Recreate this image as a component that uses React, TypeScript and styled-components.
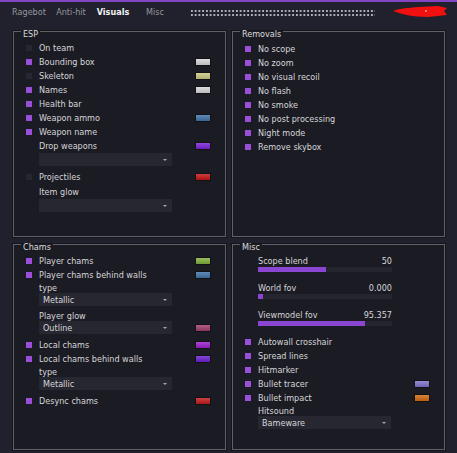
import React from 'react';
import styled, { createGlobalStyle } from 'styled-components';

const BG = '#20212c';
const BOX = '#1b1b23';
const PURPLE = '#9a4fdb';

const GlobalStyle = createGlobalStyle`
  html, body {
    margin: 0;
    padding: 0;
    background: ${BG};
  }
  body {
    font-family: "DejaVu Sans Condensed", "DejaVu Sans", sans-serif;
    font-stretch: condensed;
    font-size: 9px;
    color: #d6d6d9;
  }
`;

const Page = styled.div`
  width: 457px;
  height: 453px;
  background: ${BG};
  overflow: hidden;
`;

const TopLine = styled.div`
  height: 2px;
  background: #8344c4;
`;

const TabBar = styled.div`
  height: 20px;
  display: flex;
  align-items: center;
  padding-left: 8px;
`;

const Tab = styled.div<{ $active?: boolean }>`
  width: 42px;
  text-align: center;
  color: ${(p) => (p.$active ? '#f2f2f4' : '#95969e')};
  font-weight: ${(p) => (p.$active ? 700 : 400)};
`;

// censored user name dots
const Dots = styled.div`
  margin-left: 14px;
  margin-top: 2px;
  width: 185px;
  height: 8px;
  background-image: radial-gradient(circle, #b0b0b8 0.8px, transparent 1.1px);
  background-size: 3.75px 4px;
`;

const Scribble = styled.svg`
  margin-left: auto;
  margin-right: 9px;
  margin-top: -2px;
`;

const Grid = styled.div`
  display: grid;
  grid-template-columns: 213px 213px;
  grid-template-rows: 206px 206px;
  column-gap: 6px;
  row-gap: 7px;
  padding: 9px 0 0 13px;
`;

const Group = styled.div`
  position: relative;
  box-sizing: border-box;
  border: 1px solid #5f6068;
  box-shadow: 0 0 0 1px #15151b;
  background: ${BOX};
  padding: 9px 15px 0 12px;
`;

const GroupTitle = styled.span`
  position: absolute;
  top: -3px;
  left: 7px;
  padding: 0 2px;
  line-height: 11px;
  color: #dcdcde;
  background: linear-gradient(to bottom, transparent 2px, ${BOX} 2px);
`;

const Row = styled.div<{ $h?: number; $mt?: number }>`
  display: flex;
  align-items: center;
  height: ${(p) => p.$h ?? 14}px;
  margin-top: ${(p) => p.$mt ?? 0}px;
  white-space: nowrap;
`;

const Check = styled.span<{ $on?: boolean }>`
  width: 6px;
  height: 6px;
  margin-right: 7px;
  flex: none;
  background: ${(p) => (p.$on ? PURPLE : '#262733')};
`;

const Indent = styled.span`
  padding-left: 13px;
`;

const Swatch = styled.span<{ $c: string }>`
  margin-left: auto;
  width: 14px;
  height: 6px;
  flex: none;
  box-shadow: 0 0 0 1px rgba(0, 0, 0, 0.35);
  background: linear-gradient(to bottom, rgba(255, 255, 255, 0.18), rgba(0, 0, 0, 0.12)), ${(p) => p.$c};
`;

const Select = styled.div`
  box-sizing: border-box;
  margin-left: 13px;
  width: 133px;
  height: 13px;
  background: #262731;
  padding: 0 5px 0 4px;
  display: flex;
  align-items: center;
  color: #d6d6d9;
  flex: none;
`;

const Arrow = styled.span`
  margin-left: auto;
  width: 0;
  height: 0;
  border-left: 2px solid transparent;
  border-right: 2px solid transparent;
  border-top: 2px solid #a8a8b0;
`;

const SelectRow = styled.div<{ $mb?: number }>`
  display: flex;
  align-items: center;
  height: 13px;
  margin-bottom: ${(p) => p.$mb ?? 4}px;
`;

const SliderBlock = styled.div`
  margin-left: 13px;
  width: 134px;
  margin-bottom: 9px;
`;

const SliderHead = styled.div`
  display: flex;
  justify-content: space-between;
  align-items: center;
  height: 13px;
`;

const Track = styled.div`
  height: 5px;
  background: #24252f;
`;

const Fill = styled.div`
  height: 100%;
  background: #8a46d2;
`;

type Item = { label: string; on?: boolean; color?: string };

const CheckRow: React.FC<Item & { mt?: number }> = ({ label, on, color, mt }) => (
  <Row $mt={mt}>
    <Check $on={on} />
    {label}
    {color && <Swatch $c={color} />}
  </Row>
);

const Dropdown: React.FC<{ value?: string; color?: string; mb?: number }> = ({ value, color, mb }) => (
  <SelectRow $mb={mb}>
    <Select>
      {value}
      <Arrow />
    </Select>
    {color && <Swatch $c={color} />}
  </SelectRow>
);

const Slider: React.FC<{ label: string; value: string; pct: number }> = ({ label, value, pct }) => (
  <SliderBlock>
    <SliderHead>
      <span>{label}</span>
      <span>{value}</span>
    </SliderHead>
    <Track>
      <Fill style={{ width: `${pct}%` }} />
    </Track>
  </SliderBlock>
);

const removals = [
  'No scope',
  'No zoom',
  'No visual recoil',
  'No flash',
  'No smoke',
  'No post processing',
  'Night mode',
  'Remove skybox',
];

const App: React.FC = () => (
  <Page>
    <GlobalStyle />
    <TopLine />
    <TabBar>
      <Tab>Ragebot</Tab>
      <Tab>Anti-hit</Tab>
      <Tab $active>Visuals</Tab>
      <Tab>Misc</Tab>
      <Dots />
      <Scribble width="56" height="13" viewBox="0 0 56 13">
        <path d="M1 6 C8 3 17 3 26 2 L46 1 L55 3 L52 6 L55 10 L36 12 C21 12 9 9 1 6 Z" fill="#f0100f" />
        <circle cx="34" cy="6" r="0.9" fill="#f7b0b0" />
      </Scribble>
    </TabBar>

    <Grid>
      <Group>
        <GroupTitle>ESP</GroupTitle>
        <CheckRow label="On team" />
        <CheckRow label="Bounding box" on color="#d6d6d8" />
        <CheckRow label="Skeleton" color="#c9c77f" />
        <CheckRow label="Names" on color="#d6d6d8" />
        <CheckRow label="Health bar" on />
        <CheckRow label="Weapon ammo" on color="#3f72a8" />
        <CheckRow label="Weapon name" on />
        <Row>
          <Indent>Drop weapons</Indent>
          <Swatch $c="#7a22d6" />
        </Row>
        <Dropdown />
        <CheckRow label="Projectiles" color="#c41414" />
        <Row $h={15}>
          <Indent>Item glow</Indent>
        </Row>
        <Dropdown />
      </Group>

      <Group>
        <GroupTitle>Removals</GroupTitle>
        {removals.map((r, i) => (
          <CheckRow key={r} label={r} on mt={i === 0 ? 1 : 0} />
        ))}
      </Group>

      <Group>
        <GroupTitle>Chams</GroupTitle>
        <CheckRow label="Player chams" on color="#80b03c" />
        <CheckRow label="Player chams behind walls" on color="#3f72a8" />
        <Row $h={11}>
          <Indent>type</Indent>
        </Row>
        <Dropdown value="Metallic" />
        <Row $h={11}>
          <Indent>Player glow</Indent>
        </Row>
        <Dropdown value="Outline" color="#a03c6c" />
        <CheckRow label="Local chams" on color="#9a1ed0" />
        <CheckRow label="Local chams behind walls" on color="#6a1fd0" />
        <Row $h={11}>
          <Indent>type</Indent>
        </Row>
        <Dropdown value="Metallic" />
        <CheckRow label="Desync chams" on color="#c01a1a" />
      </Group>

      <Group>
        <GroupTitle>Misc</GroupTitle>
        <Slider label="Scope blend" value="50" pct={51} />
        <Slider label="World fov" value="0.000" pct={4} />
        <Slider label="Viewmodel fov" value="95.357" pct={80} />
        <CheckRow label="Autowall crosshair" on />
        <CheckRow label="Spread lines" on />
        <CheckRow label="Hitmarker" on />
        <CheckRow label="Bullet tracer" on color="#7b72c9" />
        <CheckRow label="Bullet impact" on color="#d2690f" />
        <Row $h={11}>
          <Indent>Hitsound</Indent>
        </Row>
        <Dropdown value="Bameware" />
      </Group>
    </Grid>
  </Page>
);

export default App;
